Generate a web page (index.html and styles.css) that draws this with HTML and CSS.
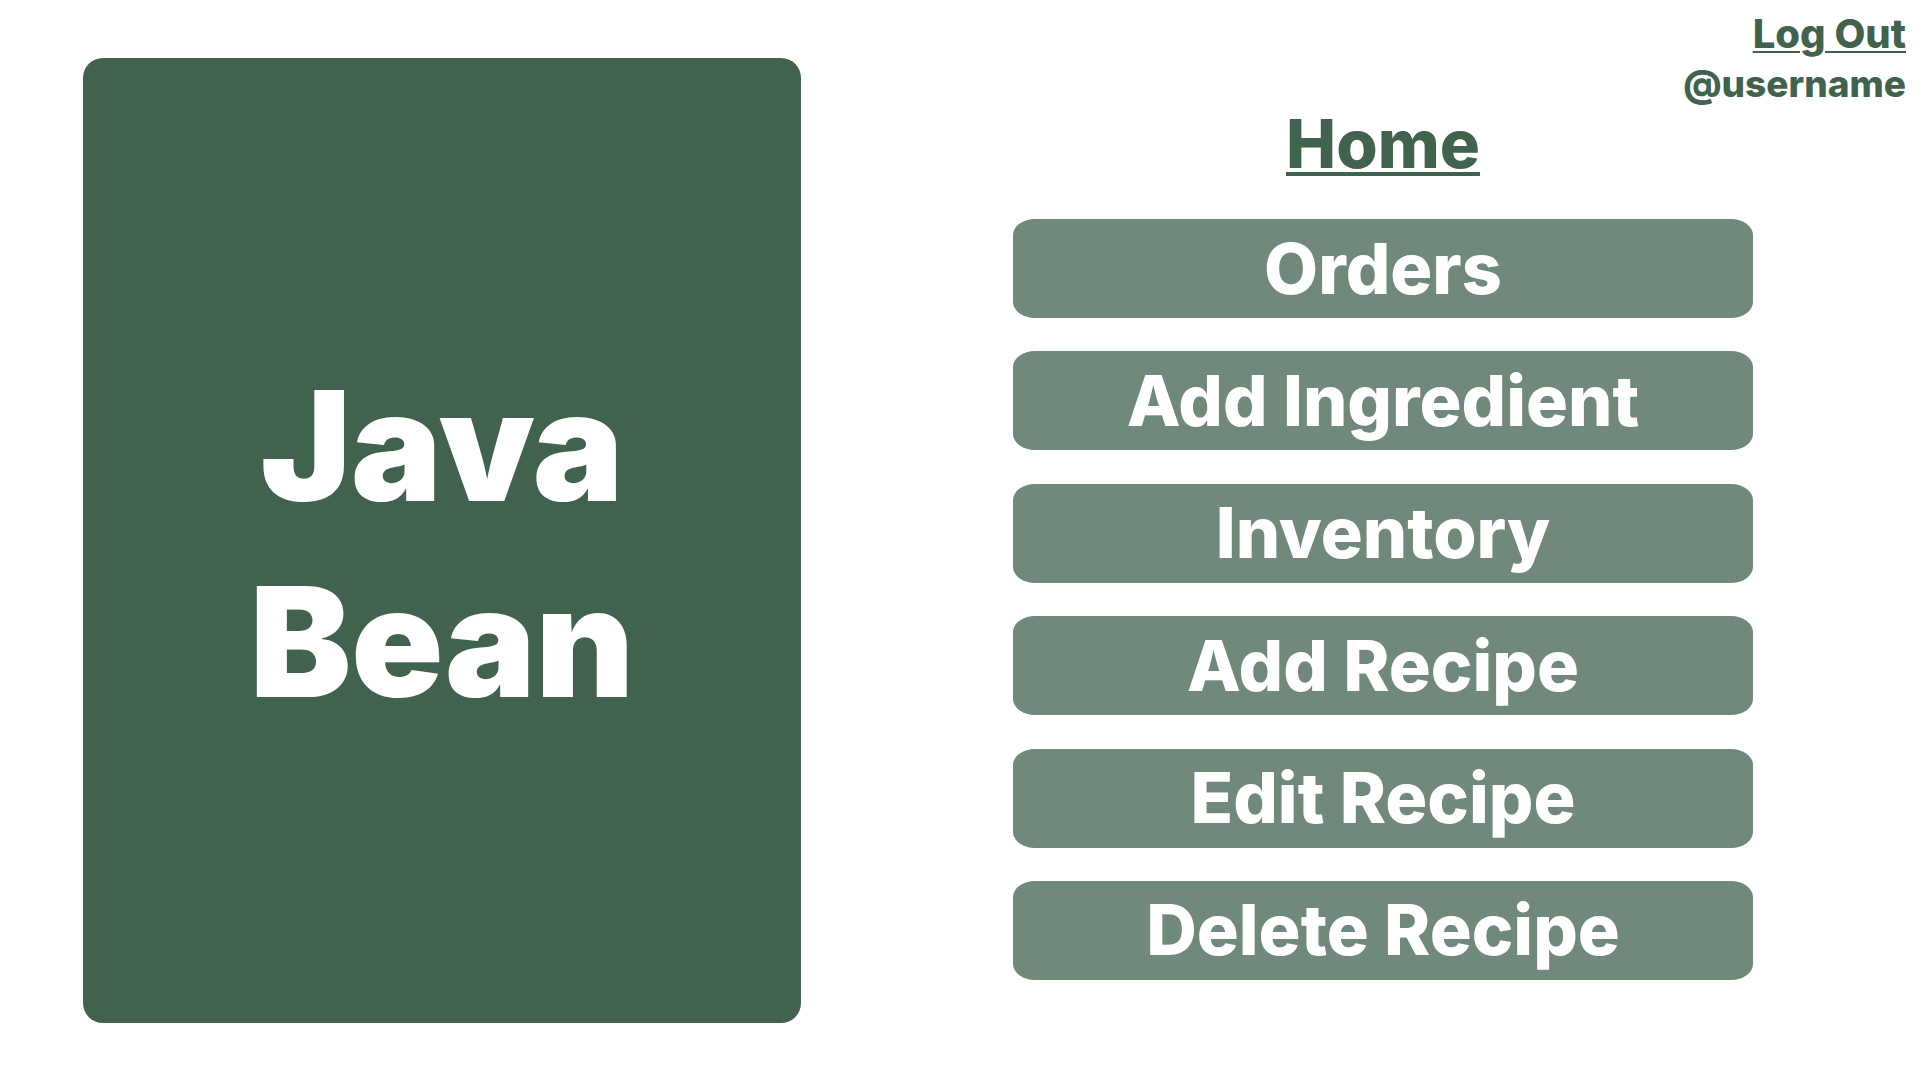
FILE: index.html
```html
<!DOCTYPE html>
<html lang="en">
<head>
<meta charset="utf-8">
<title>Java Bean</title>
<link rel="stylesheet" href="styles.css">
</head>
<body>
<main class="page">
  <section class="brand"><h1 class="brand-name">Java<br>Bean</h1></section>
  <section class="content">
    <header class="account">
      <a class="logout" href="#">Log Out</a>
      <span class="username">@username</span>
    </header>
    <div class="menu">
      <h2 class="title">Home</h2>
      <nav class="actions">
        <button class="action" type="button">Orders</button>
        <button class="action" type="button">Add Ingredient</button>
        <button class="action" type="button">Inventory</button>
        <button class="action" type="button">Add Recipe</button>
        <button class="action" type="button">Edit Recipe</button>
        <button class="action" type="button">Delete Recipe</button>
      </nav>
    </div>
  </section>
</main>
</body>
</html>
```
FILE: styles.css
```css
* { box-sizing: border-box; }
body {
  margin: 0;
  background: #fff;
  color: #41624d;
  font-family: "Gilroy", Inter, "Open Sans", sans-serif;
  font-weight: 800;
}
.page {
  display: grid;
  grid-template-columns: 801fr 1123fr;
  min-height: 100vh;
}
.brand {
  display: grid;
  place-items: center;
  margin: 58px 0 57px 83px;
  padding-top: 6px;
  border-radius: 20px;
  background: #41624d;
  color: #fff;
}
.brand-name {
  margin: 0;
  font-family: "Baloo", Inter, sans-serif;
  font-size: 152px;
  font-weight: 900;
  line-height: 196px;
  text-align: center;
}
.account {
  display: flex;
  flex-direction: column;
  align-items: flex-end;
  padding: 9px 18px 0;
  font-size: 40px;
  line-height: 50px;
}
.logout {
  color: inherit;
  text-decoration-thickness: 2px;
  text-underline-offset: 3px;
}
.username {
  font-size: 37px;
}
.menu {
  margin: 0 171px 0 212px;
}
.title {
  margin: 0;
  font-size: 67px;
  font-weight: 800;
  line-height: 70px;
  text-align: center;
  text-decoration: underline;
  text-decoration-thickness: 4px;
  text-underline-offset: 4px;
}
.actions {
  display: grid;
  align-content: space-between;
  gap: 32px;
  min-height: 837px;
  padding: 40px 0 36px;
}
.action {
  height: 99px;
  padding: 0;
  border: 0;
  border-radius: 22px / 16px;
  background: #70897a;
  color: #fff;
  font: inherit;
  font-size: 70px;
  line-height: 84px;
}
```
